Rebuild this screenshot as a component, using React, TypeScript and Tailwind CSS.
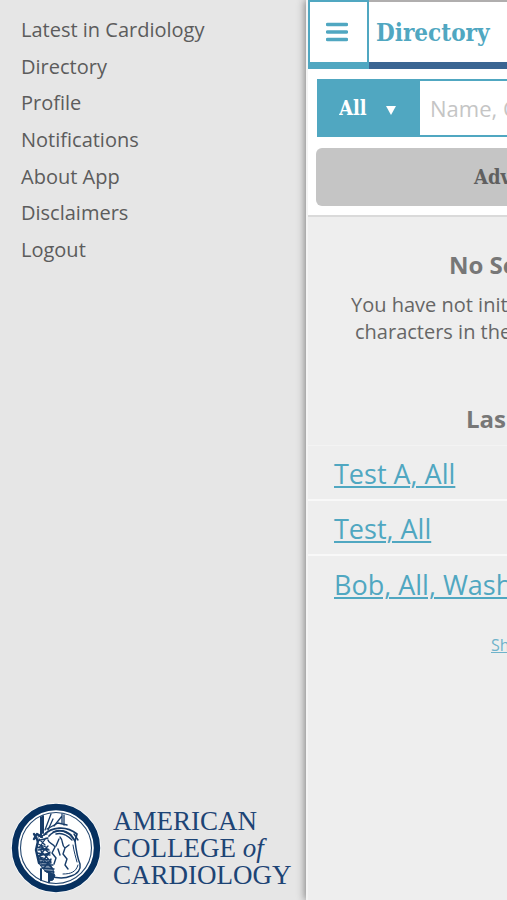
import React from "react";

const menuItems = [
  "Latest in Cardiology",
  "Directory",
  "Profile",
  "Notifications",
  "About App",
  "Disclaimers",
  "Logout",
];

const recentSearches = ["Test A, All", "Test, All", "Bob, All, Wash"];

const sans = "font-['Open_Sans','Noto_Sans',sans-serif]";
const slab = "font-['DejaVu_Serif_Condensed','DejaVu_Serif',serif]";

function Seal() {
  return (
    <svg viewBox="0 0 90 90" className="size-[90px] shrink-0" fill="none" aria-hidden="true">
      <circle cx="45" cy="45" r="45" fill="#fafbfc" />
      <circle cx="45" cy="45" r="41" fill="#fff" stroke="#06305f" strokeWidth="6.4" />
      <circle cx="45" cy="45" r="35.5" stroke="#23466f" strokeWidth="1.1" />
      <g stroke="#173c69" strokeLinecap="round" strokeLinejoin="round">
        <path d="M30 14V34M32 13V30M30 66V77M38 70V79" strokeWidth="2" />
        <path d="M40 11L34 27M42 16L37 27M51 11V20M53 12V22M43 23L51 13" strokeWidth="1.3" />
        <path d="M23 31L27 38L25 47L28 60M23 36L26 31L31 34" strokeWidth="2.4" />
        <path d="M33 32C40 24 55 22 66 31L64 38L60 32C53 26 43 27 38 33" strokeWidth="1.7" />
        <path d="M36 26L47 20L56 22M42 29C49 25 57 29 62 35M45 31C51 29 57 33 61 37M63 31L67 37" strokeWidth="1.4" />
        <path d="M64 38C65 46 66 54 69 61C70 66 67 71 60 73C53 76 45 75 39 73" strokeWidth="1.5" />
        <path d="M67 62C65 69 60 71 52 71M62 42C63 49 65 55 66 59" strokeWidth="1" />
        <path d="M37 37C38 41 42 40 44 44L41 50L45 55L43 61M45 43L48 36M49 34C53 38 50 42 54 45L52 51L56 56L54 62L57 66M54 45L58 42M47 46L49 52" strokeWidth="1.4" />
        <path d="M27 34L36 31M26 38L37 35M27 41L35 44M26 44L38 47M27 47L37 46M26 50L39 52M27 53L39 50M28 56L40 57M28 59L40 60M30 62L42 62M31 65L43 66M34 68L43 69M28 36L34 42M29 42L38 50M30 48L40 59M29 54L41 65M35 35L28 45M37 43L28 53M39 49L30 60M40 56L33 65" strokeWidth="1.3" />
        <path d="M27 53L35 56L42 66L43 72L35 69L29 62Z" fill="#173c69" fillOpacity="0.55" strokeWidth="1" />
        <path d="M38 69L44 72L42 77L38 78Z" fill="#173c69" strokeWidth="1" />
      </g>
    </svg>
  );
}

function Sidebar() {
  return (
    <aside className="flex w-[306px] shrink-0 flex-col justify-between pt-3 pb-[7px]">
      <nav aria-label="Main menu">
        <ul className="grid h-64 grid-rows-7 px-[21px] text-xl text-[#5c5c5c]">
          {menuItems.map((item) => (
            <li key={item} className="flex items-center">
              <a href="#" className="whitespace-nowrap">{item}</a>
            </li>
          ))}
        </ul>
      </nav>
      <div className="flex items-center gap-3 pl-[11px]">
        <Seal />
        <div className="whitespace-nowrap font-['Liberation_Serif',serif] text-[27px] leading-[27px] text-[#1d4475]">
          <p>AMERICAN</p>
          <p>
            COLLEGE <em>of</em>
          </p>
          <p>CARDIOLOGY</p>
        </div>
      </div>
    </aside>
  );
}

function SearchPanel() {
  return (
    <form className="flex flex-col gap-[11px] border-b-2 border-[#dadada] bg-white pt-[10px] pb-[9px] pl-2">
      <div className="ml-px flex h-[58px] border-y-2 border-l-2 border-[#50a7c1] bg-white">
        <div className="relative w-[101px] shrink-0 bg-[#50a7c1]">
          <select
            aria-label="Search category"
            defaultValue="All"
            className={`size-full appearance-none pl-5 text-xl font-bold text-white ${slab}`}
          >
            <option>All</option>
          </select>
          <svg viewBox="0 0 10 9" className="pointer-events-none absolute top-[25px] right-6 h-[9px] w-[10px]" aria-hidden="true">
            <path d="M0 0H10L5 9Z" fill="#fff" />
          </svg>
        </div>
        <input
          type="text"
          aria-label="Name, City"
          placeholder="Name, C"
          className="w-0 min-w-0 flex-1 pl-[10px] text-[22px] placeholder:text-[#c5c5c5]"
        />
      </div>
      <button
        type="button"
        className={`h-[58px] overflow-hidden rounded-l-md bg-[#c5c5c5] pl-[158px] text-left text-xl font-bold whitespace-nowrap text-[#606060] ${slab}`}
      >
        Adv
      </button>
    </form>
  );
}

function DirectoryPane() {
  return (
    <main className="z-10 min-w-0 flex-1 overflow-hidden border-l-2 border-[#f4f4f4] bg-[#eeeeee] shadow-[-1px_0_8px_rgba(0,0,0,0.45)]">
      <header className="flex h-[69px] bg-white">
        <button
          type="button"
          aria-label="Toggle menu"
          className="flex w-[61px] shrink-0 items-center justify-center border-2 border-b-[7px] border-[#50a7c1] pr-[3px]"
        >
          <svg viewBox="0 0 22 20" className="h-5 w-[22px]" aria-hidden="true">
            <path d="M1.5 2.5H20.5M1.5 10H20.5M1.5 17.5H20.5" stroke="#50a7c1" strokeWidth="3.4" strokeLinecap="round" />
          </svg>
        </button>
        <div className="flex min-w-0 flex-1 items-center border-t-2 border-b-[7px] border-t-[#b0aeae] border-b-[#3a6592] pl-[7px]">
          <h1 className={`pt-0.5 text-2xl font-bold text-[#50a7c1] ${slab}`}>Directory</h1>
        </div>
      </header>
      <SearchPanel />
      <section className="pt-8 whitespace-nowrap text-[#666666]">
        <h2 className="pl-[141px] text-2xl font-bold text-[#777777]">No Se</h2>
        <p className="pt-[10px] pl-[43px] text-xl leading-[27px]">
          You have not init
          <br />
          <span className="pl-1">characters in the</span>
        </p>
      </section>
      <section className="pt-[58px] whitespace-nowrap">
        <h2 className="pl-[158px] text-2xl font-bold text-[#777777]">Las</h2>
        <ul className="mt-[10px] divide-y-2 divide-[#f8f8f8] border-t border-[#f3f3f3] text-[27px] text-[#50a7c1]">
          {recentSearches.map((search) => (
            <li key={search} className="flex h-[55px] items-center pt-[3px] pl-[26px]">
              <a href="#" className="underline decoration-2 underline-offset-2">{search}</a>
            </li>
          ))}
        </ul>
        <a href="#" className="mt-[22px] ml-[183px] block text-base text-[#6fb3ca] underline">Sh</a>
      </section>
    </main>
  );
}

export default function App() {
  return (
    <div className={`flex min-h-screen overflow-hidden bg-[#e6e6e6] ${sans}`}>
      <Sidebar />
      <DirectoryPane />
    </div>
  );
}
